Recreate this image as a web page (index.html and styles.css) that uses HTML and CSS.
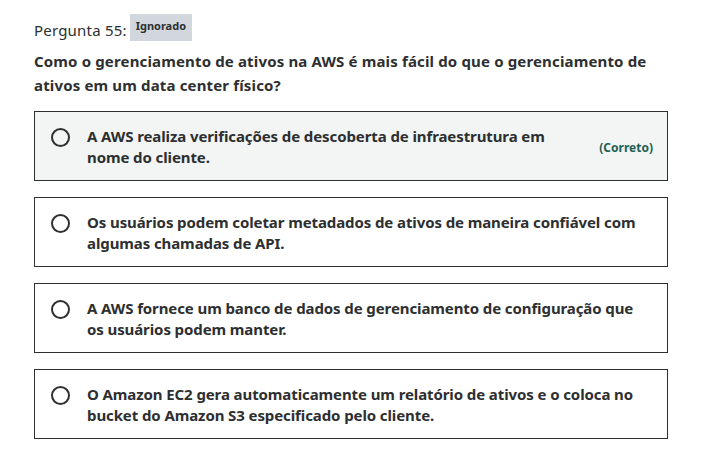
FILE: index.html
```html
<!DOCTYPE html>
<html lang="pt">
<head>
<meta charset="utf-8">
<link rel="stylesheet" href="styles.css">
</head>
<body>
<div class="page">
  <div class="qhead">
    <span class="qnum">Pergunta 55:</span>
    <span class="badge">Ignorado</span>
  </div>
  <div class="qtext">Como o gerenciamento de ativos na AWS é mais fácil do que o gerenciamento de ativos em um data center físico?</div>
  <ul class="answers">
    <li class="answer correct">
      <span class="radio"></span>
      <span class="atext">A AWS realiza verificações de descoberta de infraestrutura em nome do cliente.</span>
      <span class="tag">(Correto)</span>
    </li>
    <li class="answer">
      <span class="radio"></span>
      <span class="atext">Os usuários podem coletar metadados de ativos de maneira confiável com algumas chamadas de API.</span>
    </li>
    <li class="answer">
      <span class="radio"></span>
      <span class="atext">A AWS fornece um banco de dados de gerenciamento de configuração que os usuários podem manter.</span>
    </li>
    <li class="answer">
      <span class="radio"></span>
      <span class="atext">O Amazon EC2 gera automaticamente um relatório de ativos e o coloca no bucket do Amazon S3 especificado pelo cliente.</span>
    </li>
  </ul>
</div>
</body>
</html>
```
FILE: styles.css
```css
html, body { margin: 0; padding: 0; background: #fff; }
body {
  font-family: "Noto Sans", "Liberation Sans", sans-serif;
  color: #2d2f31;
}
.page {
  width: 634px;
  padding: 14px 0 0 34px;
}
.qhead {
  display: flex;
  align-items: flex-start;
  height: 27px;
}
.qnum {
  font-size: 15px;
  line-height: 20px;
  padding-top: 6px;
  letter-spacing: 0.2px;
}
.badge {
  background: #d1d7dc;
  font-size: 11px;
  font-weight: 700;
  line-height: 14px;
  height: 27px;
  box-sizing: border-box;
  padding: 5px 6px 0;
  margin-left: 3px;
}
.qtext {
  font-size: 15px;
  font-weight: 700;
  line-height: 24px;
  margin-top: 8px;
  letter-spacing: 0.15px;
}
.answers {
  list-style: none;
  margin: 14px 0 0;
  padding: 0;
  display: flex;
  flex-direction: column;
  gap: 16px;
}
.answer {
  border: 1px solid #2d2f31;
  display: flex;
  align-items: flex-start;
  min-height: 70px;
  box-sizing: border-box;
  padding: 14px 14px 11px 16px;
}
.answer.correct { background: #f2f5f4; }
.radio {
  flex: none;
  width: 19px;
  height: 19px;
  border: 2px solid #2d2f31;
  border-radius: 50%;
  box-sizing: border-box;
  margin-top: 2px;
  margin-right: 17px;
}
.atext {
  flex: 1;
  font-size: 15px;
  font-weight: 700;
  line-height: 21px;
  letter-spacing: -0.1px;
}
.tag {
  flex: none;
  font-size: 12px;
  font-weight: 700;
  color: #1e6055;
  align-self: center;
  margin-left: 40px;
}
```
